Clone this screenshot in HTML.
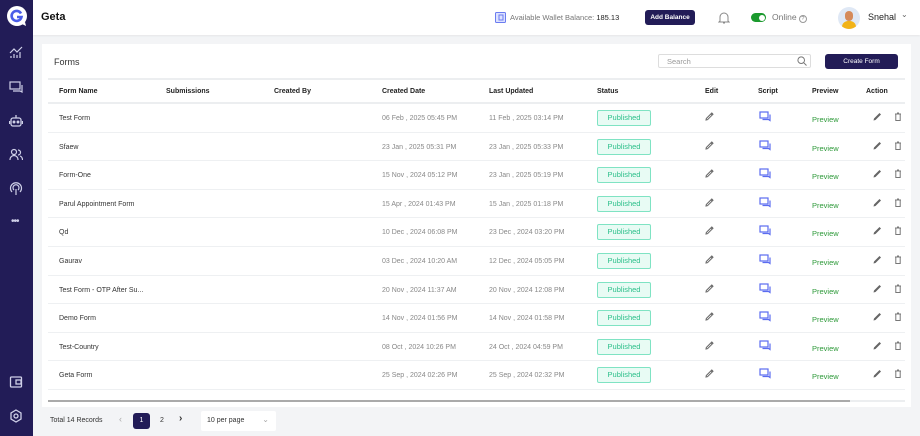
<!DOCTYPE html>
<html><head><meta charset="utf-8"><style>
*{box-sizing:border-box;margin:0;padding:0}
body{width:920px;height:436px;overflow:hidden;background:#f3f4f6;font-family:"Liberation Sans",sans-serif;position:relative;color:#222}
.sb{position:absolute;left:0;top:0;width:33px;height:436px;background:#221c57}
.sb svg{position:absolute;left:9px}
.hd{position:absolute;left:33px;top:0;right:0;height:35px;background:#fff;box-shadow:0 1px 2px rgba(0,0,0,.06)}
.abs{position:absolute}
.card{position:absolute;left:42px;top:44px;width:869px;height:363px;background:#fff}
.row{position:absolute;left:6px;width:857px;height:28.6px;border-bottom:1px solid #eef0f2;font-size:7px;color:#333}
.row span{position:absolute;top:11px}
.d{color:#888}
.pub{position:absolute;top:6px;left:549px;width:54px;height:16px;border:1px solid #7fe3c3;background:#e8fbf4;color:#2bbf8a;border-radius:2px;font-size:7.5px;text-align:center;line-height:14px}
.pv{color:#2e9a3a;font-size:7.5px}
.hr span{font-weight:bold;font-size:7px;color:#222}
</style></head><body>
<div class="sb">
<svg style="left:6px;top:5px" width="22" height="22" viewBox="0 0 22 22"><circle cx="11" cy="11" r="10" fill="#fff"/><path d="M15 8.5A5 5 0 1 0 15.5 12H11" stroke="#4a5de8" stroke-width="2.6" fill="none"/><path d="M16 19l4 2-1-4z" fill="#fff"/></svg>
<svg style="top:45px" width="14" height="14" viewBox="0 0 14 14" fill="none" stroke="#cfd0e8" stroke-width="1.2"><path d="M1 8l4-4 3 3 5-5M2 13v-2M5 13V9M8 13v-3M11 13V7"/></svg>
<svg style="top:80px" width="14" height="14" viewBox="0 0 14 14" fill="none" stroke="#cfd0e8" stroke-width="1.2"><rect x="1" y="2" width="10" height="7"/><path d="M13 5v7l-2-1H4"/></svg>
<svg style="top:114px" width="14" height="14" viewBox="0 0 14 14" fill="none" stroke="#cfd0e8" stroke-width="1.3"><rect x="2" y="4" width="10" height="8" rx="2"/><path d="M7 1v3M0.5 7v3M13.5 7v3"/><circle cx="5" cy="8" r=".8" fill="#cfd0e8"/><circle cx="9" cy="8" r=".8" fill="#cfd0e8"/></svg>
<svg style="top:148px" width="14" height="14" viewBox="0 0 14 14" fill="none" stroke="#cfd0e8" stroke-width="1.2"><circle cx="5" cy="4" r="2.5"/><path d="M1 12c0-3 2-4.5 4-4.5s4 1.5 4 4.5M9 2a2.5 2.5 0 0 1 0 5M11 8c1.5.6 2.5 2 2.5 4"/></svg>
<svg style="top:182px" width="14" height="14" viewBox="0 0 14 14" fill="none" stroke="#cfd0e8" stroke-width="1.2"><path d="M3 10a5.5 5.5 0 1 1 8 0M5 8a3 3 0 1 1 4 0M7 7v6"/></svg>
<div class="abs" style="left:11px;top:218px;color:#cfd0e8;font-size:10px;letter-spacing:-1px;line-height:8px">•••</div>
<svg style="top:375px" width="14" height="14" viewBox="0 0 14 14" fill="none" stroke="#cfd0e8" stroke-width="1.3"><rect x="1.5" y="2" width="11" height="10" rx="1"/><rect x="7" y="5" width="5" height="4"/></svg>
<svg style="top:409px" width="14" height="14" viewBox="0 0 14 14" fill="none" stroke="#cfd0e8" stroke-width="1.3"><path d="M7 1l5 3v6l-5 3-5-3V4z"/><circle cx="7" cy="7" r="2"/></svg>
</div>
<div class="hd">
<div class="abs" style="left:8px;top:11px;font-size:11px;font-weight:bold;color:#111">Geta</div>
<svg class="abs" style="left:462px;top:12px" width="11" height="11" viewBox="0 0 11 11"><rect x=".5" y=".5" width="10" height="10" rx="1" fill="#dde2ff" stroke="#6b7cf0"/><rect x="4" y="3" width="4" height="5" fill="none" stroke="#6b7cf0"/></svg>
<div class="abs" style="left:477px;top:13px;font-size:7.5px;color:#777">Available Wallet Balance: <span style="color:#222">185.13</span></div>
<div class="abs" style="left:612px;top:10px;width:50px;height:15px;background:#221c57;border-radius:3px;color:#fff;font-size:6.5px;font-weight:bold;text-align:center;line-height:15px">Add Balance</div>
<svg class="abs" style="left:685px;top:11px" width="12" height="13" viewBox="0 0 12 13" fill="none" stroke="#888" stroke-width="1"><path d="M2 10V6a4 4 0 0 1 8 0v4l1 1H1zM5 12h2"/></svg>
<div class="abs" style="left:718px;top:13px;width:15px;height:9px;border-radius:5px;background:#1b9a2e"><div style="position:absolute;right:1.5px;top:1.5px;width:6px;height:6px;border-radius:50%;background:#fff"></div></div>
<div class="abs" style="left:739px;top:12px;font-size:8.5px;color:#777">Online <span style="font-size:7px;border:1px solid #999;border-radius:50%;display:inline-block;width:8px;height:8px;line-height:7px;text-align:center;font-size:5.5px">?</span></div>
<div class="abs" style="left:805px;top:7px;width:22px;height:22px;border-radius:50%;background:#dfe8f5;overflow:hidden"><div style="position:absolute;left:4px;top:14px;width:14px;height:10px;border-radius:6px 6px 0 0;background:#f2b318"></div><div style="position:absolute;left:7px;top:4px;width:8px;height:10px;border-radius:4px;background:#d58a5a"></div></div>
<div class="abs" style="left:835px;top:12px;font-size:9px;color:#222">Snehal</div>
<div class="abs" style="left:868px;top:10px;font-size:8px;color:#666">⌄</div>
</div>
<div class="card">
<div class="abs" style="left:12px;top:13px;font-size:9px;color:#333">Forms</div>
<div class="abs" style="left:616px;top:10px;width:153px;height:14px;border:1px solid #ddd;border-radius:2px;font-size:7.5px;color:#999;padding:2px 8px">Search</div>
<svg class="abs" style="left:755px;top:12px" width="10" height="10" viewBox="0 0 10 10" fill="none" stroke="#777"><circle cx="4.2" cy="4.2" r="3.3"/><path d="M6.7 6.7L9.5 9.5"/></svg>
<div class="abs" style="left:783px;top:10px;width:73px;height:15px;background:#221c57;border-radius:3px;color:#fff;font-size:6.5px;text-align:center;line-height:15px">Create Form</div>
<div class="abs" style="left:6px;top:34px;width:857px;height:2px;background:#eceef0"></div>
<div class="row hr" style="top:36px;height:24px;border-bottom:2px solid #eceef0"><span style="left:11px;top:8px">Form Name</span><span style="left:118px;top:8px">Submissions</span><span style="left:226px;top:8px">Created By</span><span style="left:334px;top:8px">Created Date</span><span style="left:441px;top:8px">Last Updated</span><span style="left:549px;top:8px">Status</span><span style="left:657px;top:8px">Edit</span><span style="left:710px;top:8px">Script</span><span style="left:764px;top:8px">Preview</span><span style="left:818px;top:8px">Action</span></div>
<div id="rows"></div>
<div class="abs" style="left:6px;top:356px;width:857px;height:2px;background:#eceef0"></div>
<div class="abs" style="left:6px;top:356px;width:802px;height:2px;background:#aaa"></div>
</div>
<div class="abs" style="left:50px;top:417px;font-size:7px;color:#333">Total 14 Records</div>
<div class="abs" style="left:119px;top:414px;font-size:9px;color:#aaa">‹</div>
<div class="abs" style="left:133px;top:413px;width:17px;height:16px;background:#221c57;border-radius:3px;color:#fff;font-size:7px;text-align:center;line-height:16px">1</div>
<div class="abs" style="left:160px;top:417px;font-size:7px;color:#333">2</div>
<div class="abs" style="left:179px;top:413px;font-size:10px;color:#333;font-weight:bold">›</div>
<div class="abs" style="left:201px;top:411px;width:75px;height:20px;background:#fff;border-radius:2px;font-size:7px;color:#333;padding:6px 6px">10 per page<span style="position:absolute;right:7px;top:4px;color:#aaa;font-size:8px">⌄</span></div>
<script>
var d=[["Test Form","06 Feb , 2025 05:45 PM","11 Feb , 2025 03:14 PM"],["Sfaew","23 Jan , 2025 05:31 PM","23 Jan , 2025 05:33 PM"],["Form-One","15 Nov , 2024 05:12 PM","23 Jan , 2025 05:19 PM"],["Parul Appointment Form","15 Apr , 2024 01:43 PM","15 Jan , 2025 01:18 PM"],["Qd","10 Dec , 2024 06:08 PM","23 Dec , 2024 03:20 PM"],["Gaurav","03 Dec , 2024 10:20 AM","12 Dec , 2024 05:05 PM"],["Test Form - OTP After Su...","20 Nov , 2024 11:37 AM","20 Nov , 2024 12:08 PM"],["Demo Form","14 Nov , 2024 01:56 PM","14 Nov , 2024 01:58 PM"],["Test-Country","08 Oct , 2024 10:26 PM","24 Oct , 2024 04:59 PM"],["Geta Form","25 Sep , 2024 02:26 PM","25 Sep , 2024 02:32 PM"]];
var h="";
var pen='<svg width="9" height="9" viewBox="0 0 9 9" fill="none" stroke="#666" stroke-width="1"><path d="M1 8l1.5-.3L8 2.2 6.8 1 1.3 6.5zM6 1.8l1.2 1.2"/></svg>';
var pen2='<svg width="9" height="9" viewBox="0 0 9 9"><path d="M.5 8.5l.5-2L6.5 1 8 2.5 2.5 8z" fill="#666"/></svg>';
var chat='<svg width="13" height="11" viewBox="0 0 13 11" fill="none" stroke="#5b6cf0" stroke-width="1.2"><rect x="1" y="1" width="8" height="6"/><path d="M11 3.5V9.5l-1.5-1H3.5"/></svg>';
var bin='<svg width="8" height="9" viewBox="0 0 8 9" fill="none" stroke="#777" stroke-width="1"><path d="M1 2h6M3 1h2M1.8 2v6.5h4.4V2"/></svg>';
for(var i=0;i<10;i++){h+='<div class="row" style="top:'+(60+i*28.6)+'px"><span style="left:11px">'+d[i][0]+'</span><span class="d" style="left:334px">'+d[i][1]+'</span><span class="d" style="left:441px">'+d[i][2]+'</span><div class="pub">Published</div><span style="left:657px;top:8px">'+pen+'</span><span style="left:711px;top:7px">'+chat+'</span><span class="pv" style="left:764px">Preview</span><span style="left:825px;top:8px">'+pen2+'</span><span style="left:846px;top:8px">'+bin+'</span></div>'}
document.getElementById("rows").outerHTML=h;
</script>
</body></html>
